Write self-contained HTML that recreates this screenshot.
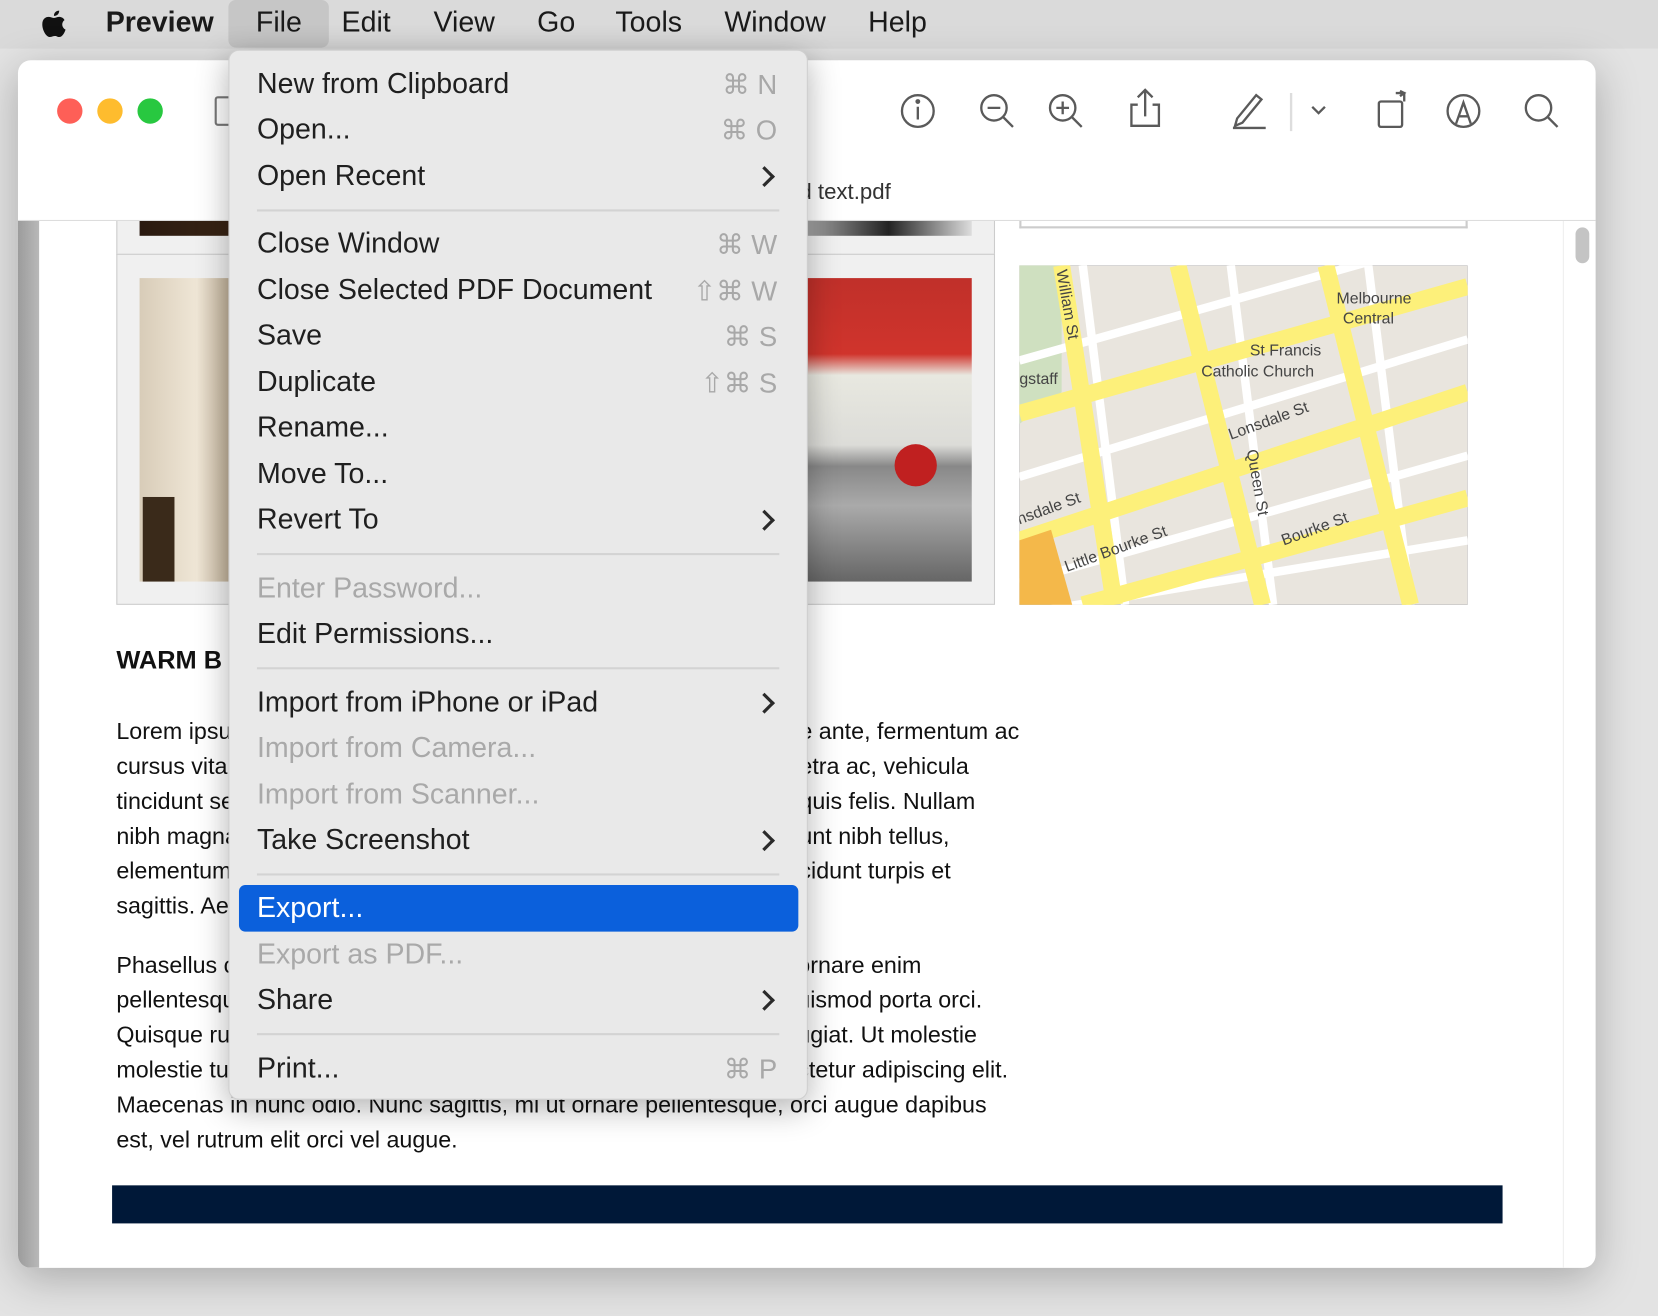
<!DOCTYPE html>
<html><head><meta charset="utf-8"><style>
*{margin:0;padding:0;box-sizing:border-box}
html,body{width:1658px;height:1316px;overflow:hidden;background:#e3e3e3}
#w{position:absolute;left:0;top:0;width:1568px;height:1245px;transform:scale(1.05740);transform-origin:0 0;font-family:"Liberation Sans",Arial,sans-serif}
.a{position:absolute}
.mb{left:0;top:0;width:1568px;height:46px;background:#dadada}
.mb span{position:absolute;top:6px;font-size:27px;color:#1a1a1a}
.win{left:17px;top:57px;width:1492px;height:1142px;background:#fff;border-radius:12px;box-shadow:0 10px 40px rgba(0,0,0,.25);overflow:hidden}
.tl{width:24px;height:24px;border-radius:50%;top:93px}
.t{font-size:22px;color:#111;white-space:nowrap}
.menu{left:216px;top:47px;width:548px;height:993px;background:#e9e9e9;border-radius:10px;box-shadow:0 8px 30px rgba(0,0,0,.3);border:1px solid #cfcfcf;z-index:5}
.mi{position:absolute;left:26px;font-size:27px;color:#1f1f1f;white-space:nowrap}
.mi.d{color:#a9a9a9}
.sc{position:absolute;right:28px;font-size:26px;color:#a8a8a8}
.ch{position:absolute;left:499px;width:14px;height:14px;border-right:3px solid #2a2a2a;border-top:3px solid #2a2a2a;transform:rotate(45deg)}
.sep{position:absolute;left:26px;right:26px;height:2px;background:#d3d3d3}
</style></head><body><div id="w">
<div class="a mb">
<svg class="a" style="left:38px;top:8px" width="26" height="30" viewBox="0 0 26 30"><path d="M18 2c0 3-2 5-5 5 0-3 2-5 5-5zM13 9c2 0 3-1 5-1s4 1 5 3c-3 2-3 7 1 9-1 3-3 7-6 7-2 0-2-1-4-1s-3 1-5 1c-3 0-7-6-7-12 0-5 3-7 6-7 2 0 3 1 5 1z" fill="#111"/></svg>
<span style="left:100px;font-weight:bold">Preview</span>
<div class="a" style="left:216px;top:0;width:95px;height:45px;background:#c6c6c6;border-radius:7px"></div>
<span style="left:242px">File</span><span style="left:323px">Edit</span><span style="left:410px">View</span><span style="left:508px">Go</span><span style="left:582px">Tools</span><span style="left:685px">Window</span><span style="left:821px">Help</span>
</div>
<div class="a win">
<div class="a" style="left:0;top:152px;width:20px;height:990px;background:linear-gradient(90deg,#9c9c9c,#b8b8b8)"></div>
<div class="a" style="left:0;top:151px;width:1492px;height:1px;background:#ddd"></div>
<div class="a" style="left:1473px;top:158px;width:13px;height:34px;border-radius:7px;background:#c4c4c4"></div>
<div class="a" style="left:1461px;top:152px;width:1px;height:990px;background:#eee"></div>
</div>
<div class="a tl" style="left:54px;background:#fe5f57"></div>
<div class="a tl" style="left:92px;background:#febc2e"></div>
<div class="a tl" style="left:130px;background:#28c840"></div>
<div class="a" style="left:203px;top:91px;width:16px;height:28px;border:2px solid #777;border-radius:3px"></div>
<div class="a t" style="left:756px;top:170px;color:#333;font-size:21px">d text.pdf</div>
<svg class="a" style="left:840px;top:80px" width="650" height="50" viewBox="840 80 650 50" fill="none" stroke="#5a5a5a" stroke-width="2.2">
<circle cx="868" cy="105" r="15"/><line x1="868" y1="101" x2="868" y2="113"/><circle cx="868" cy="96" r="1.2" fill="#5a5a5a"/>
<circle cx="940" cy="102" r="12"/><line x1="934" y1="102" x2="946" y2="102"/><line x1="949" y1="111" x2="958" y2="120"/>
<circle cx="1005" cy="102" r="12"/><line x1="999" y1="102" x2="1011" y2="102"/><line x1="1005" y1="96" x2="1005" y2="108"/><line x1="1014" y1="111" x2="1023" y2="120"/>
<path d="M1076 99h-6v20h26v-20h-6M1083 110V86M1076 92l7-7 7 7"/>
<path d="M1170 112l18-22 5 4-18 22-7 3zM1166 121h31"/>
<line x1="1221" y1="88" x2="1221" y2="124" stroke="#ddd"/>
<path d="M1241 101l6 6 6-6"/>
<rect x="1304" y="96" width="22" height="24" rx="2"/><path d="M1320 88h8v8M1324 86l4 2-4 3"/>
<circle cx="1384" cy="105" r="15"/><path d="M1377 117l7-20 7 20M1380 110h8"/>
<circle cx="1455" cy="102" r="12"/><line x1="1464" y1="111" x2="1473" y2="120"/>
</svg>
<div class="a" style="left:110px;top:209px;width:831px;height:32px;background:#f0f0f0;border:1px solid #ccc;border-top:0"></div>
<div class="a" style="left:132px;top:209px;width:787px;height:14px;background:linear-gradient(90deg,#2a1a10 0,#3a2515 12%,#aaa 80%,#222 90%,#ddd 100%)"></div>
<div class="a" style="left:964px;top:209px;width:424px;height:7px;border:2px solid #ccc;border-top:0"></div>
<div class="a" style="left:110px;top:240px;width:831px;height:332px;background:#f0f0f0;border:1px solid #ccc"></div>
<div class="a" style="left:132px;top:263px;width:90px;height:287px;background:linear-gradient(90deg,#d8ccb8,#efe6d6 60%,#b9a88f)"></div>
<div class="a" style="left:135px;top:470px;width:30px;height:80px;background:#3a2a1a"></div>
<div class="a" style="left:750px;top:263px;width:169px;height:287px;background:linear-gradient(180deg,#c0302a 0,#d0342c 25%,#e8e8e0 32%,#dcdcd8 55%,#888 62%,#aaa 75%,#666 100%)"></div>
<div class="a" style="left:846px;top:420px;width:40px;height:40px;border-radius:50%;background:#c02020"></div>
<svg class="a" style="left:964px;top:251px" width="424" height="321" viewBox="0 0 424 321">
<rect width="424" height="321" fill="#e9e5de" stroke="#bbb"/>
<path d="M0 0h40v120L0 150z" fill="#cfe0c0"/>
<g stroke="#fff" stroke-width="8"><path d="M0 90L424 -30M0 200L424 70M0 300L424 180M0 330L424 260M60 0l40 321M200 0l40 321M330 0l40 321"/></g>
<g stroke="#fdf07a" stroke-width="16"><path d="M0 140L424 20M0 260L424 120M60 321L424 220M40 0l50 321M150 0l80 321M290 0l80 321"/></g>
<path d="M0 260l30 -10 20 71H0z" fill="#f4b84a"/>
<g font-family="Liberation Sans" font-size="15" fill="#444"><text x="300" y="36">Melbourne</text><text x="306" y="55">Central</text><text x="218" y="85">St Francis</text><text x="172" y="105">Catholic Church</text><text x="0" y="112">gstaff</text><text x="200" y="165" transform="rotate(-20 200 165)">Lonsdale St</text><text x="250" y="265" transform="rotate(-20 250 265)">Bourke St</text><text x="45" y="290" transform="rotate(-20 45 290)">Little Bourke St</text><text x="0" y="245" transform="rotate(-20 0 245)">nsdale St</text><text x="215" y="175" transform="rotate(80 215 175)">Queen St</text><text x="35" y="5" transform="rotate(80 35 5)">William St</text></g>
</svg>
<div class="a" style="left:110px;top:611px;font-size:24px;font-weight:bold;color:#111">WARM B</div>
<div class="a t" style="left:110px;top:675px;line-height:33px">Lorem ipsu<br>cursus vita<br>tincidunt se<br>nibh magna<br>elementum<br>sagittis. Ae</div>
<div class="a t" style="left:756px;top:675px;line-height:33px">e ante, fermentum ac<br>etra ac, vehicula<br>quis felis. Nullam<br>unt nibh tellus,<br>cidunt turpis et</div>
<div class="a t" style="left:110px;top:896px;line-height:33px">Phasellus c<br>pellentesqu<br>Quisque ru<br>molestie tu<br>Maecenas in nunc odio. Nunc sagittis, mi ut ornare pellentesque, orci augue dapibus<br>est, vel rutrum elit orci vel augue.</div>
<div class="a t" style="left:754px;top:896px;line-height:33px">ornare enim<br>uismod porta orci.<br>ugiat. Ut molestie<br>ctetur adipiscing elit.</div>
<div class="a" style="left:106px;top:1121px;width:1315px;height:36px;background:#001838"></div>
<div class="a menu">
<div class="mi" style="top:16px">New from Clipboard</div><div class="sc" style="top:17px">⌘ N</div>
<div class="mi" style="top:59px">Open...</div><div class="sc" style="top:60px">⌘ O</div>
<div class="mi" style="top:103px">Open Recent</div><div class="ch" style="top:112px"></div>
<div class="sep" style="top:150px"></div>
<div class="mi" style="top:167px">Close Window</div><div class="sc" style="top:168px">⌘ W</div>
<div class="mi" style="top:211px">Close Selected PDF Document</div><div class="sc" style="top:212px">⇧⌘ W</div>
<div class="mi" style="top:254px">Save</div><div class="sc" style="top:255px">⌘ S</div>
<div class="mi" style="top:298px">Duplicate</div><div class="sc" style="top:299px">⇧⌘ S</div>
<div class="mi" style="top:341px">Rename...</div>
<div class="mi" style="top:385px">Move To...</div>
<div class="mi" style="top:428px">Revert To</div><div class="ch" style="top:437px"></div>
<div class="sep" style="top:475px"></div>
<div class="mi d" style="top:493px">Enter Password...</div>
<div class="mi" style="top:536px">Edit Permissions...</div>
<div class="sep" style="top:583px"></div>
<div class="mi" style="top:601px">Import from iPhone or iPad</div><div class="ch" style="top:610px"></div>
<div class="mi d" style="top:644px">Import from Camera...</div>
<div class="mi d" style="top:688px">Import from Scanner...</div>
<div class="mi" style="top:731px">Take Screenshot</div><div class="ch" style="top:740px"></div>
<div class="sep" style="top:778px"></div>
<div class="a" style="left:9px;top:789px;width:529px;height:44px;background:#0b60dc;border-radius:6px"></div>
<div class="mi" style="top:795px;color:#fff">Export...</div>
<div class="mi d" style="top:839px">Export as PDF...</div>
<div class="mi" style="top:882px">Share</div><div class="ch" style="top:891px"></div>
<div class="sep" style="top:929px"></div>
<div class="mi" style="top:947px">Print...</div><div class="sc" style="top:948px">⌘ P</div>
</div>
</div></body></html>
